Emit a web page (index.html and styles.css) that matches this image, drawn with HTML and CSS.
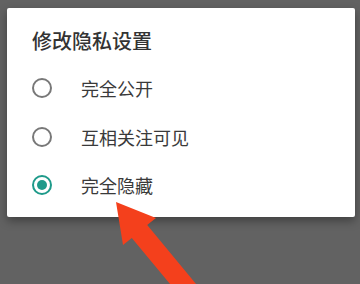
FILE: index.html
```html
<!DOCTYPE html>
<html lang="zh-CN">
<head>
    <meta charset="UTF-8">
    <meta name="viewport" content="width=device-width, initial-scale=1.0">
    <title>修改隐私设置</title>
    <link rel="stylesheet" href="styles.css">
</head>
<body>
    <div class="dialog">
        <h1 class="dialog-title">修改隐私设置</h1>
        <div class="option">
            <span class="radio"></span>
            <span class="option-label">完全公开</span>
        </div>
        <div class="option">
            <span class="radio"></span>
            <span class="option-label">互相关注可见</span>
        </div>
        <div class="option">
            <span class="radio checked"></span>
            <span class="option-label">完全隐藏</span>
        </div>
    </div>

    <!-- annotation arrow pointing at the selected option -->
    <svg class="arrow" width="360" height="284" viewBox="0 0 360 284">
        <polygon points="116,202 156,218 147.2,225.1 204,293.6 188.6,306.4 131.8,237.9 123,245" fill="#f4401c"/>
    </svg>
</body>
</html>
```

FILE: styles.css
```css
body {
    margin: 0;
    padding: 8px 5px 0 7px;
    width: 360px;
    height: 284px;
    box-sizing: border-box;
    background-color: #626262;
    font-family: "Noto Sans CJK SC", "Noto Sans", sans-serif;
    overflow: hidden;
    position: relative;
}

.dialog {
    background-color: #fff;
    border-radius: 2px;
    padding: 19px 25px 8px 25px;
    height: 209px;
    box-sizing: border-box;
    box-shadow: 0 4px 10px rgba(0, 0, 0, 0.35);
}

.dialog-title {
    margin: 0 0 9px 0;
    font-size: 20px;
    line-height: 28px;
    font-weight: 500;
    color: #333;
}

.option {
    display: flex;
    align-items: center;
    height: 48.5px;
}

.radio {
    width: 20px;
    height: 20px;
    box-sizing: border-box;
    border: 2px solid #787878;
    border-radius: 50%;
    margin-right: 29px;
    display: flex;
    align-items: center;
    justify-content: center;
}

.radio.checked {
    border-color: #1e9a8a;
}

.radio.checked::after {
    content: "";
    width: 10px;
    height: 10px;
    border-radius: 50%;
    background-color: #1e9a8a;
}

.option-label {
    font-size: 18px;
    color: #3a3a3a;
}

.arrow {
    position: absolute;
    left: 0;
    top: 0;
}
```
